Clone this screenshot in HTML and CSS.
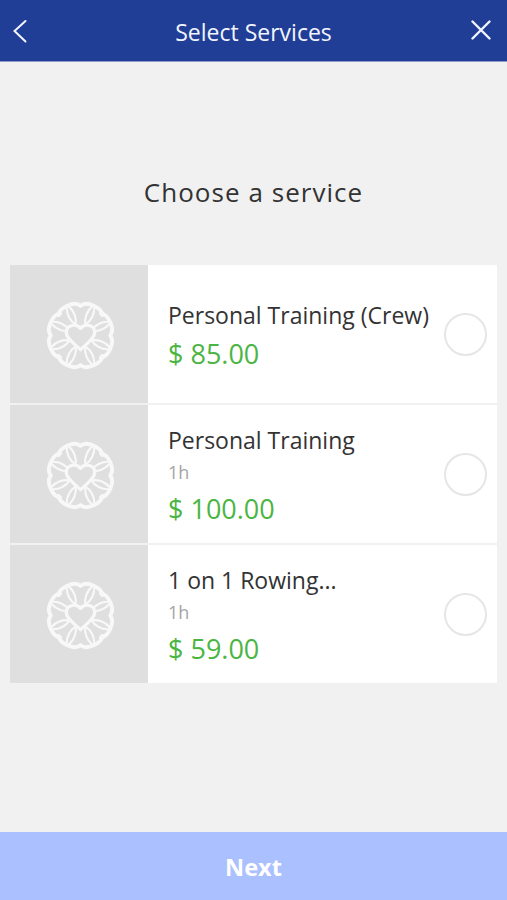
FILE: index.html
```html
<!DOCTYPE html>
<html lang="en">
<head>
<meta charset="utf-8">
<title>Select Services</title>
<link rel="stylesheet" href="styles.css">
</head>
<body>
<svg class="defs" width="0" height="0" aria-hidden="true">
  <defs>
    <g id="petal">
      <path stroke-width="3.9" d="M-11.5-27.2C-8-33.8 8-33.8 11.5-27.2"/>
      <path stroke-width="2.1" d="M0-12C-3.8-17-3.8-25-1.5-30M0-12C3.8-17 3.8-25 1.5-30"/>
    </g>
  </defs>
  <symbol id="flower" viewBox="-36 -36 72 72">
    <g fill="none" stroke="#f8f8f8" stroke-linejoin="round" stroke-linecap="round">
      <use href="#petal" transform="rotate(24)"/>
      <use href="#petal" transform="rotate(66)"/>
      <use href="#petal" transform="rotate(114)"/>
      <use href="#petal" transform="rotate(156)"/>
      <use href="#petal" transform="rotate(204)"/>
      <use href="#petal" transform="rotate(246)"/>
      <use href="#petal" transform="rotate(294)"/>
      <use href="#petal" transform="rotate(336)"/>
      <path fill="#dfdfdf" stroke-width="3.2" d="M0 14C-5 9-14 3-14-3C-14-11-4-12 0-7C4-12 14-11 14-3C14 3 5 9 0 14Z"/>
    </g>
  </symbol>
</svg>
<header class="bar">
  <svg class="back" viewBox="0 0 14 24"><path d="M12.5 2L1.5 12L12.5 22.5"/></svg>
  <h1 class="bar-title">Select Services</h1>
  <svg class="close" viewBox="0 0 20 20"><path d="M1.5 1.5L18.5 18.5M18.5 1.5L1.5 18.5"/></svg>
</header>
<main class="content">
  <h2 class="heading">Choose a service</h2>
  <ul class="services">
    <li class="service">
      <div class="thumb"><svg class="flower"><use href="#flower"/></svg></div>
      <div class="info"><span class="name">Personal Training (Crew)</span><span class="price">$ 85.00</span></div>
      <span class="radio"></span>
    </li>
    <li class="service">
      <div class="thumb"><svg class="flower"><use href="#flower"/></svg></div>
      <div class="info"><span class="name">Personal Training</span><span class="time">1h</span><span class="price">$ 100.00</span></div>
      <span class="radio"></span>
    </li>
    <li class="service">
      <div class="thumb"><svg class="flower"><use href="#flower"/></svg></div>
      <div class="info"><span class="name">1 on 1 Rowing...</span><span class="time">1h</span><span class="price">$ 59.00</span></div>
      <span class="radio"></span>
    </li>
  </ul>
</main>
<button class="next">Next</button>
</body>
</html>
```
FILE: styles.css
```css
* { box-sizing: border-box; }
body {
  margin: 0;
  height: 900px;
  display: flex;
  flex-direction: column;
  background: #f1f1f1;
  color: #333;
  font-family: "Open Sans", sans-serif;
  overflow: hidden;
}
.defs { position: absolute; }
.bar {
  height: 62px;
  display: grid;
  grid-template-columns: 20px 1fr 20px;
  align-items: center;
  padding: 2px 16px 0 12px;
  background: #213e97;
  border-bottom: 1px solid #8d9bcb;
  color: #f2f5ff;
}
.bar-title { margin: 1px 0 0 4px; font-size: 23px; font-weight: 400; line-height: 32px; text-align: center; white-space: nowrap; }
.back, .close { fill: none; stroke: #f2f5ff; stroke-linecap: round; }
.back { width: 14px; height: 24px; margin-left: 1px; stroke-width: 2; margin-top: -1px; }
.close { width: 20px; height: 20px; stroke-width: 2.4; margin-top: -3px; }
.content { flex: 1; padding: 0 10px; }
.heading {
  margin: 112px 0 54px;
  font-size: 26px;
  font-weight: 400;
  line-height: 37px;
  letter-spacing: 1.05px;
  text-align: center;
}
.services { margin: 0; padding: 0; list-style: none; display: grid; gap: 2px; }
.service { height: 138px; display: flex; align-items: center; background: #fff; padding-right: 10px; }
.thumb { width: 138px; height: 138px; display: grid; place-items: center; background: #dfdfdf; }
.flower { width: 73px; height: 73px; margin-top: 2px; margin-left: 2px; }
.info { flex: 1; padding: 6px 0 0 20px; display: flex; flex-direction: column; white-space: nowrap; }
.name { font-size: 23px; line-height: 32px; }
.time { font-size: 18px; line-height: 32px; margin-bottom: -2px; color: #a5a5a5; }
.price { font-size: 27px; line-height: 45px; color: #4bb543; }
.radio { width: 43px; height: 43px; margin-top: 1px; border: 2px solid #e6e6e6; border-radius: 50%; }
.next {
  height: 68px;
  padding: 2px 0 0;
  border: 0;
  background: #abc0ff;
  color: #fff;
  font: 700 23.5px/32px "Open Sans", sans-serif;
}
```
